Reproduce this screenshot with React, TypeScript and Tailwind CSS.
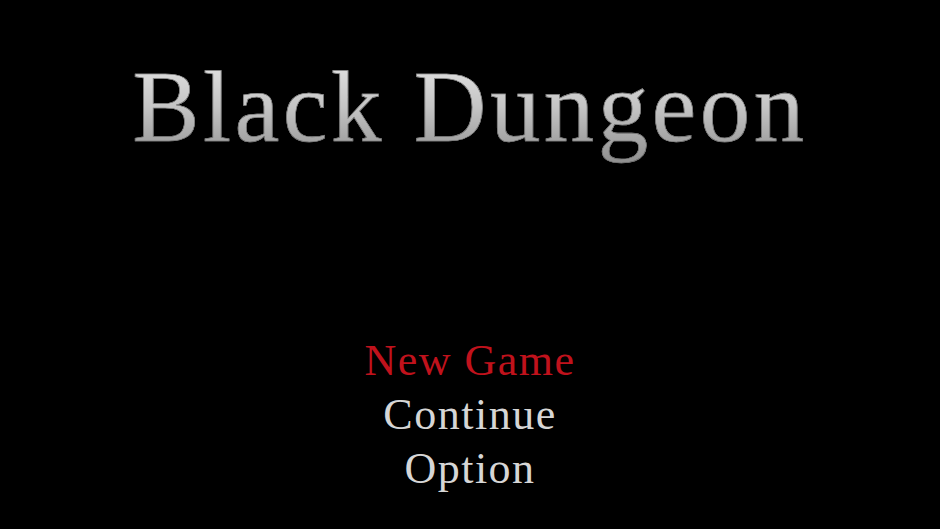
export default function App() {
  const items = [
    { label: 'New Game', active: true },
    { label: 'Continue', active: false },
    { label: 'Option', active: false },
  ];

  return (
    <div className="w-[940px] h-[529px] bg-black flex flex-col items-center overflow-hidden font-['Liberation_Serif','Times_New_Roman',serif]">
      {/* title */}
      <h1 className="mt-[47px] text-[101px] leading-[121px] tracking-[3.4px] bg-gradient-to-b from-[#ececec] via-[#c4c4c4] to-[#8a8a8a] bg-clip-text text-transparent [-webkit-text-stroke:0.6px_#6e6e6e]">
        Black Dungeon
      </h1>

      {/* menu */}
      <ul className="mt-[166px] flex flex-col items-center">
        {items.map((item) => (
          <li
            key={item.label}
            className={`text-[44px] leading-[54px] tracking-[1.5px] ${item.active ? 'text-[#c0121c]' : 'text-[#d6d6d6]'}`}
          >
            {item.label}
          </li>
        ))}
      </ul>
    </div>
  );
}
